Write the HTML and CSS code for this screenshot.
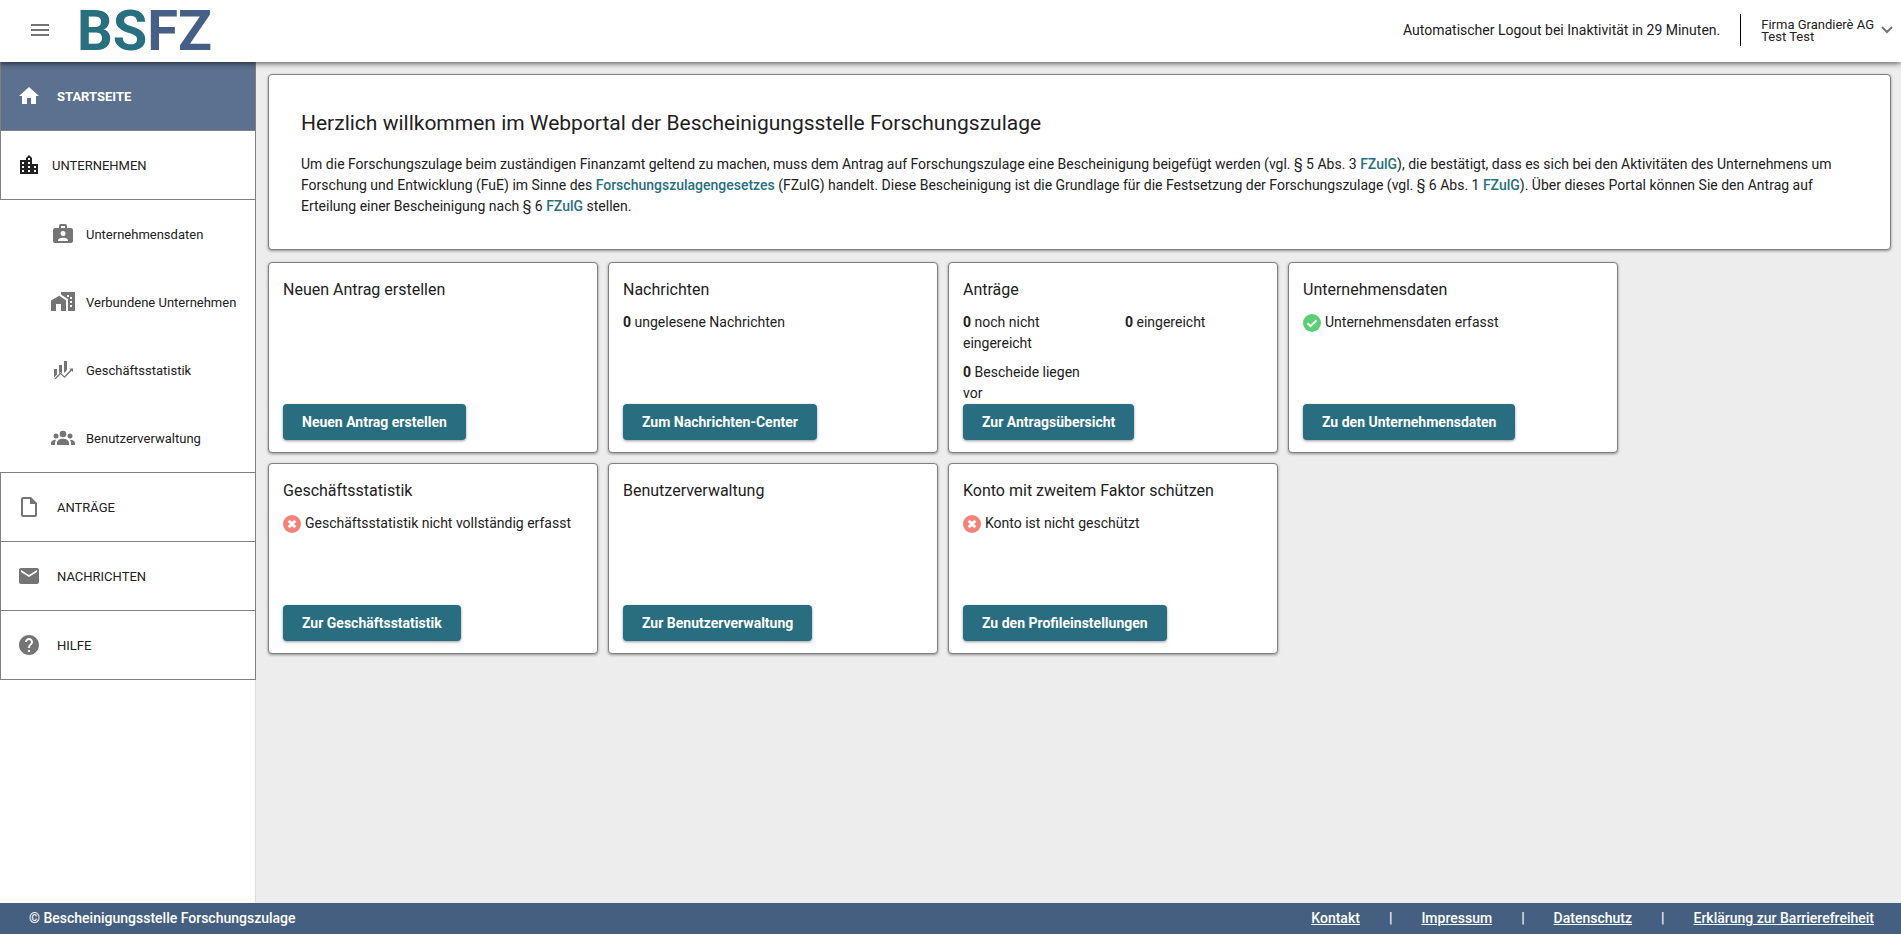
FILE: index.html
```html
<!DOCTYPE html>
<html lang="de">
<head>
<meta charset="utf-8">
<title>BSFZ Webportal</title>
<link rel="stylesheet" href="styles.css">
</head>
<body>
<header class="topbar">
  <button class="menu-button" type="button" aria-label="Menü">
    <svg class="icon" viewBox="0 0 24 24"><path d="M3 18h18v-2H3v2zm0-5h18v-2H3v2zm0-7v2h18V6H3z"/></svg>
  </button>
  <a class="logo" href="#"><span class="logo-start">BS</span><span class="logo-end">FZ</span></a>
  <p class="logout">Automatischer Logout bei Inaktivität in 29 Minuten.</p>
  <button class="account" type="button">
    <span class="account-text"><span>Firma Grandierè AG</span><span>Test Test</span></span>
    <svg class="chevron" viewBox="0 0 12 12"><path d="M1 3l5 5 5-5"/></svg>
  </button>
</header>
<div class="layout">
  <nav class="sidebar">
    <a class="nav-item nav-item-active" href="#">
      <svg class="icon" viewBox="0 0 24 24"><path d="M10 20v-6h4v6h5v-8h3L12 3 2 12h3v8z"/></svg>
      <span>STARTSEITE</span>
    </a>
    <a class="nav-item nav-item-open" href="#">
      <svg class="icon" viewBox="0 0 24 24"><path d="M15 11V5l-3-3-3 3v2H3v14h18V11h-6zm-8 8H5v-2h2v2zm0-4H5v-2h2v2zm0-4H5V9h2v2zm6 8h-2v-2h2v2zm0-4h-2v-2h2v2zm0-4h-2V9h2v2zm0-4h-2V5h2v2zm6 12h-2v-2h2v2zm0-4h-2v-2h2v2z"/></svg>
      <span>UNTERNEHMEN</span>
    </a>
    <div class="subnav">
      <a class="sub-item" href="#">
        <svg class="icon" viewBox="0 0 24 24"><path fill-rule="evenodd" d="M20 6h-4V4c0-1.100-.9-2-2-2h-4c-1.100 0-2 .9-2 2v2H4c-1.100 0-2 .9-2 2v11c0 1.100.9 2 2 2h16c1.100 0 2-.9 2-2V8c0-1.100-.9-2-2-2zM10 4h4v2h-4V4zm2 5a2.500 2.500 0 1 1 0 5 2.500 2.500 0 0 1 0-5zm5 10H7v-.75c0-1.700 3.300-2.500 5-2.500s5 .8 5 2.500V19z"/></svg>
        <span>Unternehmensdaten</span>
      </a>
      <a class="sub-item" href="#">
        <svg class="icon" viewBox="0 0 24 24"><path d="M8.170 5.700L0 10.480V21h5v-7h5v7h5V10.250L8.170 5.700z"/><path fill-rule="evenodd" d="M10 2v2.500l7 4.700V21h7V2H10zm8 5h-2V5h2v2zm3 10h-2v-2h2v2zm0-4h-2v-2h2v2zm0-4h-2V7h2v2z"/></svg>
        <span>Verbundene Unternehmen</span>
      </a>
      <a class="sub-item" href="#">
        <svg class="icon" viewBox="0 0 24 24"><path d="M3 11h3v5.500l-3 3zM8 7h3v8.500l-1.500-1.300L8 15.600zM13 3h3v9l-3 3z"/><path d="M18.500 10.500H22V14l-1.300-1.200-7.200 7.200-4-3.700L5 21H3l6.400-6.400 4 3.600 6.100-6.400z"/></svg>
        <span>Geschäftsstatistik</span>
      </a>
      <a class="sub-item" href="#">
        <svg class="icon" viewBox="0 0 24 24"><circle cx="12" cy="8" r="3.300"/><circle cx="5" cy="10" r="2.500"/><circle cx="19" cy="10" r="2.500"/><path d="M6 19v-2c0-2.700 3-4.200 6-4.200s6 1.500 6 4.200v2zM0 19v-2c0-1.800 1.800-3.200 5.200-3.200-.8.900-1.200 2-1.200 3.200v2zM24 19v-2c0-1.800-1.800-3.200-5.200-3.200.8.900 1.200 2 1.200 3.200v2z"/></svg>
        <span>Benutzerverwaltung</span>
      </a>
    </div>
    <a class="nav-item nav-item-first" href="#">
      <svg class="icon" viewBox="0 0 24 24"><path fill-rule="evenodd" d="M6 2h8l6 6v12c0 1.100-.9 2-2 2H6c-1.100 0-2-.9-2-2V4c0-1.100.9-2 2-2zm0 2v16h12V9h-5V4H6z"/></svg>
      <span>ANTRÄGE</span>
    </a>
    <a class="nav-item" href="#">
      <svg class="icon" viewBox="0 0 24 24"><path d="M20 4H4c-1.100 0-1.990.9-1.990 2L2 18c0 1.100.9 2 2 2h16c1.100 0 2-.9 2-2V6c0-1.100-.9-2-2-2zm0 4l-8 5-8-5V6l8 5 8-5v2z"/></svg>
      <span>NACHRICHTEN</span>
    </a>
    <a class="nav-item" href="#">
      <svg class="icon" viewBox="0 0 24 24"><path d="M12 2C6.480 2 2 6.480 2 12s4.480 10 10 10 10-4.480 10-10S17.520 2 12 2zm1 17h-2v-2h2v2zm2.070-7.750l-.9.920C13.450 12.900 13 13.500 13 15h-2v-.5c0-1.100.45-2.100 1.170-2.830l1.240-1.260c.37-.36.59-.86.59-1.410 0-1.100-.9-2-2-2s-2 .9-2 2H8c0-2.210 1.790-4 4-4s4 1.790 4 4c0 .88-.36 1.680-.93 2.250z"/></svg>
      <span>HILFE</span>
    </a>
  </nav>
  <main class="content">
    <section class="welcome">
      <h1>Herzlich willkommen im Webportal der Bescheinigungsstelle Forschungszulage</h1>
      <p>Um die Forschungszulage beim zuständigen Finanzamt geltend zu machen, muss dem Antrag auf Forschungszulage eine Bescheinigung beigefügt werden (vgl. § 5 Abs. 3 <a href="#">FZulG</a>), die bestätigt, dass es sich bei den Aktivitäten des Unternehmens um Forschung und Entwicklung (FuE) im Sinne des <a href="#">Forschungszulagengesetzes</a> (FZulG) handelt. Diese Bescheinigung ist die Grundlage für die Festsetzung der Forschungszulage (vgl. § 6 Abs. 1 <a href="#">FZulG</a>). Über dieses Portal können Sie den Antrag auf Erteilung einer Bescheinigung nach § 6 <a href="#">FZulG</a> stellen.</p>
    </section>
    <div class="cards">
      <section class="card">
        <h2>Neuen Antrag erstellen</h2>
        <button class="action" type="button">Neuen Antrag erstellen</button>
      </section>
      <section class="card">
        <h2>Nachrichten</h2>
        <p><b>0</b> ungelesene Nachrichten</p>
        <button class="action" type="button">Zum Nachrichten-Center</button>
      </section>
      <section class="card">
        <h2>Anträge</h2>
        <div class="counts">
          <p><b>0</b> noch nicht eingereicht</p>
          <p><b>0</b> eingereicht</p>
          <p><b>0</b> Bescheide liegen vor</p>
        </div>
        <button class="action" type="button">Zur Antragsübersicht</button>
      </section>
      <section class="card">
        <h2>Unternehmensdaten</h2>
        <p class="status"><svg class="status-icon" viewBox="0 0 18 18"><circle class="ok" cx="9" cy="9" r="9"/><path class="tick" d="M4.500 9.200l3 3 6-6"/></svg>Unternehmensdaten erfasst</p>
        <button class="action" type="button">Zu den Unternehmensdaten</button>
      </section>
      <section class="card">
        <h2>Geschäftsstatistik</h2>
        <p class="status"><svg class="status-icon" viewBox="0 0 18 18"><circle class="bad" cx="9" cy="9" r="9"/><path class="cross" d="M5.700 5.700l6.600 6.600M12.300 5.700l-6.600 6.600"/></svg>Geschäftsstatistik nicht vollständig erfasst</p>
        <button class="action" type="button">Zur Geschäftsstatistik</button>
      </section>
      <section class="card">
        <h2>Benutzerverwaltung</h2>
        <button class="action" type="button">Zur Benutzerverwaltung</button>
      </section>
      <section class="card">
        <h2>Konto mit zweitem Faktor schützen</h2>
        <p class="status"><svg class="status-icon" viewBox="0 0 18 18"><circle class="bad" cx="9" cy="9" r="9"/><path class="cross" d="M5.700 5.700l6.600 6.600M12.300 5.700l-6.600 6.600"/></svg>Konto ist nicht geschützt</p>
        <button class="action" type="button">Zu den Profileinstellungen</button>
      </section>
    </div>
  </main>
</div>
<footer class="footer">
  <span>© Bescheinigungsstelle Forschungszulage</span>
  <div class="footer-links">
    <a href="#">Kontakt</a><span>|</span><a href="#">Impressum</a><span>|</span><a href="#">Datenschutz</a><span>|</span><a href="#">Erklärung zur Barrierefreiheit</a>
  </div>
</footer>
</body>
</html>
```
FILE: styles.css
```css
* { box-sizing: border-box; }

body {
  margin: 0;
  min-height: 100vh;
  display: flex;
  flex-direction: column;
  font: 14px/21px Roboto, "Liberation Sans", sans-serif;
  color: #212121;
  background: #ededed;
}

h1, h2, p { margin: 0; font-weight: 400; }
a { color: inherit; text-decoration: none; }
button { font-family: inherit; color: inherit; border: 0; cursor: pointer; }
.icon { width: 24px; height: 24px; flex: none; fill: #757575; }

.topbar {
  position: relative;
  z-index: 1;
  display: flex;
  align-items: center;
  height: 62px;
  padding: 0 8px 2px 28px;
  background: #fff;
  box-shadow: 0 1px 6px rgba(0, 0, 0, .7);
}
.menu-button { display: flex; padding: 0; background: none; }
.logo {
  margin-left: 25px;
  padding-top: 2px;
  font-size: 56px;
  line-height: 60px;
  font-weight: 700;
  color: #465f87;
}
.logo-start { color: #277080; }
.logout { margin-left: auto; padding-right: 20px; }
.account {
  display: flex;
  align-items: center;
  gap: 7px;
  height: 32px;
  padding: 0 0 0 20px;
  border-left: 1px solid #000;
  background: none;
  font-size: 13px;
  line-height: 12px;
  text-align: left;
}
.account-text { display: flex; flex-direction: column; padding-top: 2px; }
.chevron { width: 12px; height: 12px; fill: none; stroke: #757575; stroke-width: 2; }

.layout { flex: 1; display: flex; }

.sidebar {
  width: 256px;
  flex: none;
  background: #fff;
  border-right: 1px solid #dcdcdc;
  font-size: 13px;
}
.nav-item {
  display: flex;
  align-items: center;
  gap: 16px;
  height: 69px;
  margin-right: -1px;
  padding-left: 16px;
  border: 1px solid #808080;
  border-top: 0;
}
.nav-item-active { background: #5c7090; color: #fff; font-weight: 700; }
.nav-item-active .icon { fill: #fff; }
.nav-item-open { gap: 11px; }
.nav-item-open .icon { fill: #212121; }
.nav-item-first { height: 70px; border-top: 1px solid #808080; }
.subnav { margin-right: -1px; border-right: 1px solid #808080; }
.sub-item {
  display: flex;
  align-items: center;
  gap: 11px;
  height: 68px;
  padding-left: 51px;
}

.content { flex: 1; min-width: 0; padding: 12px 10px 12px 12px; }
.welcome, .card {
  background: #fff;
  border: 1px solid #808080;
  border-radius: 4px;
  box-shadow: 0 1px 3px rgba(0, 0, 0, .4);
}
.welcome { padding: 32px; }
.welcome h1 { margin-bottom: 15px; font-size: 21px; line-height: 32px; }
.welcome a { color: #277080; font-weight: 500; }
.cards {
  display: grid;
  grid-template-columns: repeat(auto-fill, 330px);
  gap: 10px;
  max-width: 1380px;
  margin-top: 12px;
}
.card {
  display: flex;
  flex-direction: column;
  align-items: flex-start;
  min-height: 191px;
  padding: 15px 14px 12px;
}
.card h2 { margin-bottom: 10px; font-size: 16px; line-height: 24px; }
.counts { display: grid; grid-template-columns: 1fr 1fr; gap: 8px 24px; width: 100%; }
.status { display: flex; align-items: center; gap: 4px; }
.status-icon { width: 18px; height: 18px; flex: none; fill: none; }
.ok { fill: #58d073; }
.bad { fill: #f58278; }
.tick, .cross { stroke: #fff; stroke-width: 2; }
.cross { stroke-width: 3; }
.action {
  height: 36px;
  margin-top: auto;
  padding: 0 19px;
  border-radius: 4px;
  background: #286e80;
  box-shadow: 0 1px 3px rgba(0, 0, 0, .4);
  color: #fff;
  font-size: 14px;
  font-weight: 700;
}

.footer {
  display: flex;
  justify-content: space-between;
  align-items: center;
  height: 31px;
  padding: 0 27px 0 29px;
  background: #455f80;
  color: #fff;
  font-weight: 500;
}
.footer-links { display: flex; gap: 29px; }
.footer-links a { text-decoration: underline; }
```
